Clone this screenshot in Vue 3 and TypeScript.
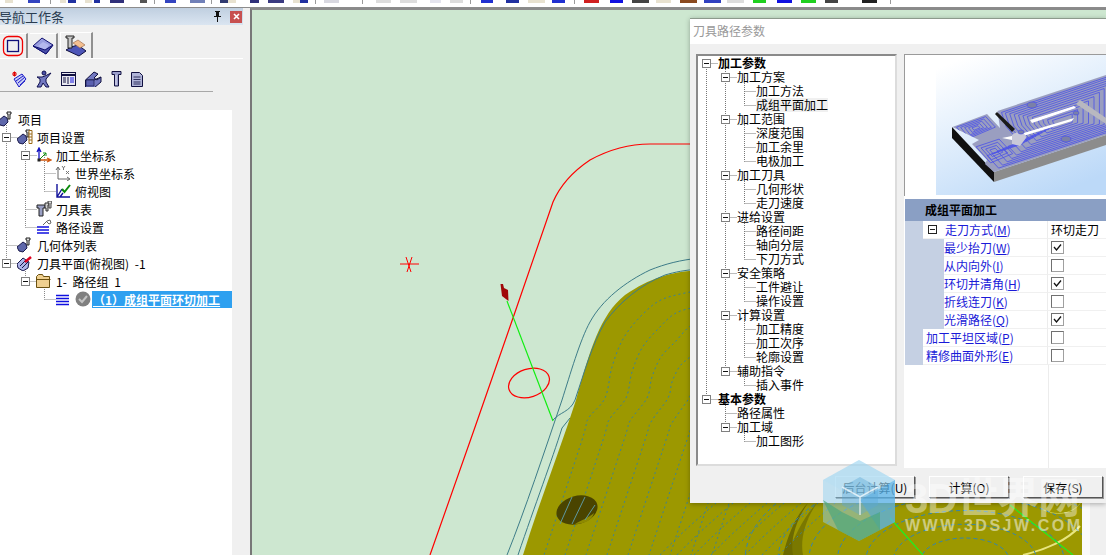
<script setup lang="ts">
interface Row { label: string; d: number; exp?: boolean; icon?: string; bold?: boolean; sel?: boolean; hi?: boolean }

const leftRows: Row[] = [
  { label: '项目', d: -1, icon: 'proj' },
  { label: '项目设置', d: 0, exp: true, icon: 'settings' },
  { label: '加工坐标系', d: 1, exp: true, icon: 'coords' },
  { label: '世界坐标系', d: 2, icon: 'world' },
  { label: '俯视图', d: 2, icon: 'top' },
  { label: '刀具表', d: 1, icon: 'tools' },
  { label: '路径设置', d: 1, icon: 'pathset' },
  { label: '几何体列表', d: 0, icon: 'proj' },
  { label: '刀具平面(俯视图) -1', d: 0, exp: true, icon: 'plane' },
  { label: '1- 路径组 1', d: 1, exp: true, icon: 'folder' },
  { label: '（1）成组平面环切加工', d: 2, icon: 'path', sel: true }
]

const rightRows: Row[] = [
  { label: '加工参数', d: 0, exp: true, bold: true },
  { label: '加工方案', d: 1, exp: true },
  { label: '加工方法', d: 2 },
  { label: '成组平面加工', d: 2, hi: true },
  { label: '加工范围', d: 1, exp: true },
  { label: '深度范围', d: 2 },
  { label: '加工余里', d: 2 },
  { label: '电极加工', d: 2 },
  { label: '加工刀具', d: 1, exp: true },
  { label: '几何形状', d: 2 },
  { label: '走刀速度', d: 2 },
  { label: '进给设置', d: 1, exp: true },
  { label: '路径间距', d: 2 },
  { label: '轴向分层', d: 2 },
  { label: '下刀方式', d: 2 },
  { label: '安全策略', d: 1, exp: true },
  { label: '工件避让', d: 2 },
  { label: '操作设置', d: 2 },
  { label: '计算设置', d: 1, exp: true },
  { label: '加工精度', d: 2 },
  { label: '加工次序', d: 2 },
  { label: '轮廓设置', d: 2 },
  { label: '辅助指令', d: 1, exp: true },
  { label: '插入事件', d: 2 },
  { label: '基本参数', d: 0, exp: true, bold: true },
  { label: '路径属性', d: 1 },
  { label: '加工域', d: 1, exp: true },
  { label: '加工图形', d: 2 }
]

function connectors(rows: Row[], base: number, rowH: number): string {
  let out = ''
  rows.forEach((r, i) => {
    if (r.d < 0) return
    const x = base + 19 * r.d + 0.5
    const y = Math.round(rowH * (i + 0.5)) + 0.5
    out += `M${x} ${y}H${x + 11}`
    for (let j = i - 1; j >= 0; j--) {
      if (rows[j].d <= r.d) {
        out += `M${x} ${Math.round(rowH * (j + 0.5))}V${y}`
        break
      }
    }
  })
  return out
}
const leftLines = connectors(leftRows, 6, 18)
const rightLines = connectors(rightRows, 8, 14)

interface Prop { name: string; key: string; sub?: boolean; head?: boolean; value?: string; checked?: boolean }
const props: Prop[] = [
  { name: '走刀方式(', key: 'M', head: true, value: '环切走刀' },
  { name: '最少抬刀(', key: 'W', sub: true, checked: true },
  { name: '从内向外(', key: 'I', sub: true, checked: false },
  { name: '环切并清角(', key: 'H', sub: true, checked: true },
  { name: '折线连刀(', key: 'K', sub: true, checked: false },
  { name: '光滑路径(', key: 'Q', sub: true, checked: true },
  { name: '加工平坦区域(', key: 'P', checked: false },
  { name: '精修曲面外形(', key: 'E', checked: false }
]

const toolbar: [number, number, string][] = [
  [5, 13, '#e8e2d0'], [28, 40, '#3344c0'], [60, 66, '#e8e2d0'], [68, 76, '#2030a0'],
  [85, 92, '#e8e2d0'], [94, 100, '#2030a0'], [110, 124, '#30307a'], [140, 147, '#555'],
  [165, 176, '#3344c0'], [190, 205, '#7080b8'], [220, 228, '#303a70'], [228, 236, '#e8e2d0'],
  [250, 259, '#30307a'], [268, 284, '#3a3a80'], [293, 300, '#e8e2d0'], [300, 308, '#2030a0'],
  [324, 339, '#d8d8e0'], [376, 391, '#dddddd'], [400, 417, '#dddddd'], [430, 441, '#e4e4ee'],
  [450, 463, '#dddddd'], [481, 493, '#2030d0'], [506, 519, '#2030a0'], [528, 545, '#e8e2d0'],
  [552, 565, '#2030d0'], [584, 599, '#d02020'], [610, 623, '#1010e0'], [632, 649, '#444'],
  [656, 671, '#e8e2d0'], [680, 697, '#8a4a20'], [704, 721, '#3040c0'], [727, 744, '#ddd'],
  [753, 766, '#20d020'], [777, 792, '#1010e0'], [801, 816, '#20d020'], [825, 838, '#444'],
  [862, 877, '#222']
]
const toolbarSeps = [50, 154, 211, 315, 362, 470, 574, 890]

// Dotted tool-path contours on the olive part: nested copies of its edge.
function smooth(p: [number, number][]): string {
  let d = `M${p[0][0]} ${p[0][1]}`
  for (let i = 0; i < p.length - 1; i++) {
    const a = p[Math.max(i - 1, 0)], b = p[i], c = p[i + 1], e = p[Math.min(i + 2, p.length - 1)]
    const c1 = [b[0] + (c[0] - a[0]) / 6, b[1] + (c[1] - a[1]) / 6]
    const c2 = [c[0] - (e[0] - b[0]) / 6, c[1] - (e[1] - b[1]) / 6]
    d += `C${c1[0].toFixed(1)} ${c1[1].toFixed(1)} ${c2[0].toFixed(1)} ${c2[1].toFixed(1)} ${c[0]} ${c[1]}`
  }
  return d
}
const contours: string[] = []
for (let i = 1; i <= 9; i++) {
  contours.push(smooth([
    [700, 274 + 16 * i], [650 + 13 * i, 285 + 14 * i], [624 + 17 * i, 303 + 13 * i],
    [604 + 19 * i, 330 + 9 * i], [592 + 20 * i, 362 + 5 * i], [584 + 21 * i, 398],
    [567 + 21 * i, 418 + i], [561 + 21 * i, 440], [523 + 21 * i, 555]
  ]))
}
const diagonals: string[] = []
for (let i = 0; i < 8; i++) {
  const x = 690 + i * 17
  diagonals.push(`M${x - 30} 555C${x - 14} 538 ${x + 4} 522 ${x + 26} 503`)
}
const rings = [40, 65, 90, 116, 142, 170, 200]

// Cutter rings on the preview plate: shrunken copies of each pocket outline.
function nested(poly: [number, number][], cx: number, cy: number, steps: number[]): string {
  return steps
    .map((s) =>
      poly
        .map((p, i) => `${i ? 'L' : 'M'}${(cx + (p[0] - cx) * s).toFixed(1)} ${(cy + (p[1] - cy) * s).toFixed(1)}`)
        .join('') + 'Z'
    )
    .join('')
}
const plateMain = nested(
  [[999, 112], [1130, 68], [1130, 126], [996, 170], [984, 157], [1020, 145], [1004, 127]],
  1062, 122,
  [0.96, 0.9, 0.83, 0.76, 0.69, 0.62, 0.55, 0.47, 0.39, 0.31, 0.23, 0.15]
)
const plateLeft = nested(
  [[954, 127], [987, 115], [998, 127], [965, 141]],
  976, 128,
  [0.88, 0.7, 0.52, 0.34, 0.18]
)
const plateLower = nested(
  [[973, 146], [1000, 137], [1016, 154], [990, 165]],
  994, 151,
  [0.85, 0.62, 0.4, 0.2]
)
</script>

<template>
  <div class="screen">
    <div class="toolbar">
      <span
        v-for="(t, i) in toolbar"
        :key="i"
        class="tb-bit"
        :style="{ left: t[0] + 'px', width: t[1] - t[0] + 'px', background: t[2] }"
      ></span>
      <span v-for="s in toolbarSeps" :key="s" class="tb-sep" :style="{ left: s + 'px' }"></span>
    </div>

    <div class="main">
      <aside class="nav">
        <div class="nav-title">
          <span class="nav-title-text">导航工作条</span>
          <svg class="pin" width="9" height="11" viewBox="0 0 9 11"><path d="M2 0h5v1H6v4h2v1H5v5H4V6H1V5h2V1H2z" fill="#111" /></svg>
          <span class="close">
            <svg width="7" height="7" viewBox="0 0 7 7"><path d="M1 1l5 5M6 1L1 6" stroke="#fff" stroke-width="1.6" /></svg>
          </span>
        </div>

        <div class="tabs">
          <div class="tab">
            <svg width="22" height="22" viewBox="0 0 22 22">
              <rect x="1.500" y="1.500" width="19" height="19" rx="5" fill="none" stroke="#f00000" stroke-width="1.300" />
              <rect x="5.500" y="5.500" width="11" height="11" fill="none" stroke="#10107a" stroke-width="1.300" />
            </svg>
          </div>
          <div class="tab">
            <svg width="22" height="18" viewBox="0 0 22 18">
              <path d="M1 9L10 1l11 7-7 9z" fill="#9a9fe0" stroke="#101070" />
              <path d="M6 9l5-4 6 3-4 5z" fill="#b4b8ee" />
              <path d="M1 9l13 8 7-9-8 5z" fill="#4a4fa8" stroke="#101070" />
            </svg>
          </div>
          <div class="tab tab-active">
            <svg width="24" height="22" viewBox="0 0 24 22">
              <path d="M2 15l5-3 7-2 8 6-7 5z" fill="#4e56b8" stroke="#101040" />
              <path d="M9 8l5-3 7 5-5 3z" fill="#f4bf90" stroke="#a07050" stroke-width=".7" />
              <path d="M2 1h8v2H8v10H4V3H2z" fill="#c8c8c8" stroke="#222" />
            </svg>
          </div>
        </div>

        <div class="tools">
          <svg width="16" height="18" viewBox="0 0 16 18">
            <path d="M1 4h5M3.500 1.500v5M2 2l3 4M5 2L2 6" stroke="#e00000" stroke-width="1" />
            <path d="M3 9l8-5 4 5-7 8z" fill="#c8ccf4" stroke="#1818c8" />
            <path d="M5 11l7-5M7 13l7-6M9 15l5-4" stroke="#1818c8" />
          </svg>
          <svg width="16" height="18" viewBox="0 0 16 18">
            <circle cx="8" cy="3" r="2" fill="#4a50a8" stroke="#101050" />
            <path d="M1 7h5l3-1 6-3-5 6v3l3 5h-3l-3-4-2 4H1l3-5V9z" fill="#7278c0" stroke="#101050" />
          </svg>
          <svg width="15" height="14" viewBox="0 0 15 14">
            <rect x=".5" y=".5" width="14" height="13" fill="#e8e8f0" stroke="#101040" />
            <path d="M1 3h13" stroke="#101040" stroke-width="2" />
            <path d="M7 5v7M2 6h3M2 8h3M2 10h3" stroke="#101040" />
            <path d="M9 6h4M9 8h4M9 10h4" stroke="#1818e0" />
          </svg>
          <svg width="17" height="16" viewBox="0 0 17 16">
            <path d="M.5 9L9 1l4 2-4 4 3 2 4-3v5l-7 6H.5z" fill="#7278c0" stroke="#101040" />
            <path d="M.5 9H9l7-3" fill="none" stroke="#101040" />
            <path d="M1 9h8v6H1z" fill="#5a60b0" stroke="#101040" stroke-width=".6" />
          </svg>
          <svg width="11" height="16" viewBox="0 0 11 16">
            <path d="M1 .5h9v3H7.500V15h-4V3.500H1z" fill="#9a9ecb" stroke="#101040" />
            <path d="M5 4v10" stroke="#e8e8f4" />
          </svg>
          <svg width="12" height="15" viewBox="0 0 12 15">
            <path d="M.5.5h8l3 3v11H.5z" fill="#b0b4d8" stroke="#101040" />
            <path d="M2.500 5h7M2.500 7.500h7M2.500 10h7M2.500 12h7" stroke="#101040" stroke-width=".8" />
          </svg>
        </div>
        <div class="tools-rule"></div>

        <div class="nav-body">
          <div class="tree nav-tree">
            <svg class="tree-lines" width="232" height="220"><path :d="leftLines" stroke="#888" stroke-dasharray="1 1" fill="none" /></svg>
            <div v-for="r in leftRows" :key="r.label" class="nav-row">
              <span class="indent" :style="{ width: Math.max(r.d, 0) * 19 + 'px' }"></span>
              <span class="slot" :class="{ 'slot-root': r.d < 0 }"><i v-if="r.exp" class="exp exp-nav"></i></span>
              <svg class="row-icon" :class="{ 'icon-root': r.d < 0 }" width="16" height="16" viewBox="0 0 16 16">
                <template v-if="r.icon === 'proj' || r.icon === 'settings'">
                  <path d="M0 10l6-5 3 2 1 4-4 4-4-1z" fill="#5e67aa" stroke="#18184a" />
                  <path d="M9 1h4v2h-1v5h-2V3H9z" fill="#ddd" stroke="#222" />
                  <path v-if="r.icon === 'settings'" d="M12 1.500h3v13h-3zM12 5h3M12 8h3M12 11h3" fill="#fff" stroke="#9a6a18" />
                </template>
                <template v-else-if="r.icon === 'coords'">
                  <path d="M3 13V2M1 5l2-4 2 4" stroke="#1010c0" fill="none" stroke-width="1.300" />
                  <path d="M3 13h11M11 11l4 2-4 2" stroke="#d05810" fill="none" stroke-width="1.300" />
                  <path d="M3 13l7-7M7 6h3v3" stroke="#109010" fill="none" />
                  <rect x="1.500" y="11.500" width="3" height="3" fill="#222" />
                </template>
                <template v-else-if="r.icon === 'world'">
                  <path d="M3 14V3M1 5l2-3 2 3M3 14h11M12 12l3 2-3 2" stroke="#666" fill="none" />
                  <path d="M7 1l1.500 2L10 1M8.500 3v2M11 6l3 3M14 6l-3 3" stroke="#777" fill="none" />
                </template>
                <template v-else-if="r.icon === 'top'">
                  <path d="M2 1v13h13M2 14L7 6M5 14l3-4" stroke="#10109a" fill="none" stroke-width="1.400" />
                  <path d="M7 6l2.500 3L15 2" stroke="#0a8a0a" fill="none" stroke-width="2" />
                </template>
                <template v-else-if="r.icon === 'tools'">
                  <path d="M1 4h8v3H7v8H3V7H1z" fill="#9aa0c4" stroke="#222" />
                  <path d="M9 2h4v2h-1v6h-2V7H9z" fill="#d0d0d0" stroke="#333" />
                  <path d="M12 0h4v2h-1v5h-2V2h-1z" fill="#ddd" stroke="#444" />
                </template>
                <template v-else-if="r.icon === 'pathset'">
                  <path d="M1 8h12M1 11h12M1 14h12" stroke="#1010e0" stroke-width="1.400" />
                  <path d="M7 6l4-4 3-1 1 3-2 1-2-2" fill="none" stroke="#666" />
                </template>
                <template v-else-if="r.icon === 'plane'">
                  <path d="M0 9l6-6 6 4-1 6-5 3-5-3z" fill="#aeb4e8" stroke="#18184a" />
                  <path d="M3 11l6-6M5 13l6-6" stroke="#18184a" />
                  <path d="M8 7l6-5" stroke="#e00020" stroke-width="2.500" />
                </template>
                <template v-else-if="r.icon === 'folder'">
                  <path d="M.5 3.500l2-2h4l1 2h6v11H.5z" fill="#f0d090" stroke="#6a5010" />
                  <path d="M.5 6.500h14" stroke="#6a5010" />
                </template>
                <template v-else-if="r.icon === 'path'">
                  <path d="M1 4.500h13M1 7.500h13M1 10.500h13M1 13.500h13" stroke="#1010e0" stroke-width="1.300" />
                </template>
              </svg>
              <svg v-if="r.icon === 'path'" class="state" width="16" height="16" viewBox="0 0 16 16">
                <circle cx="8" cy="8" r="7.500" fill="#808080" />
                <path d="M4 8l3 3 5-6" stroke="#c4c4c4" stroke-width="2" fill="none" />
              </svg>
              <span class="nav-label" :class="{ selected: r.sel }">{{ r.label }}</span>
            </div>
          </div>
          <div class="scrollbar"></div>
        </div>
      </aside>

      <div class="gutter"></div>

      <div class="canvas">
        <svg width="854" height="545" viewBox="252 10 854 545">
          <path d="M523 555C540 500 560 450 576 400C590 350 600 315 625 295C650 278 670 272 700 270L1106 270V555Z" fill="#9c9800" />
          <path d="M817 503C805 520 800 540 803 555H787C795 535 805 515 817 503Z" fill="#7a7800" />
          <path d="M808 503C796 520 790 540 793 555H783C788 535 796 515 808 503Z" fill="#6c6a00" />
          <path d="M1023 555C1045 550 1068 540 1080 526" stroke="#e8e680" stroke-width="2" fill="none" />
          <path d="M1040 508C1060 520 1078 510 1082 500" stroke="#c8c640" stroke-width="1" fill="none" />
          <g fill="none" stroke="#3d7c88" stroke-width="1">
            <path d="M507 555C525 510 545 450 562 400C570 375 580 340 590 322C602 300 625 282 650 270C665 264 680 260 700 258" />
            <path d="M553 420C560 412 570 412 575 400C585 370 592 345 605 322C620 302 640 285 665 275C675 272 685 270 700 269" />
            <path d="M518 555C535 505 552 460 562 428L570 418" />
          </g>
          <g fill="none" stroke="#3c8296" stroke-width="1" stroke-dasharray="2 3">
            <path v-for="c in contours" :key="c" :d="c" />
            <path v-for="c in diagonals" :key="c" :d="c" />
          </g>
          <ellipse cx="577" cy="510" rx="21" ry="14" transform="rotate(-16 577 510)" fill="#4a4400" />
          <path d="M575 524C582 520 588 518 594 513C592 520 585 524 575 524Z" fill="#8e8a00" />
          <path d="M572 497L560 524M585 497L572 524M595 505L585 520" stroke="#5e98a0" stroke-width="1" />
          <g fill="none" stroke="#2f84b8" stroke-width="1" stroke-dasharray="4 3">
            <ellipse v-for="r in rings" :key="r" cx="965" cy="560" :rx="r * 1.100" :ry="r * 0.550" />
          </g>
          <path d="M430 555L474 430L513 318L553 202C560 186 572 172 590 160C612 148 632 144 650 144H700" fill="none" stroke="#ff0000" stroke-width="1.200" />
          <ellipse cx="529" cy="383" rx="21" ry="14" transform="rotate(-18 529 383)" fill="none" stroke="#ff0000" stroke-width="1.200" />
          <path d="M400 264h19M406 257l5 15M412 257l-5 15" stroke="#ff0000" fill="none" />
          <path d="M507 301L553 421" stroke="#10ee10" stroke-width="1.200" />
          <path d="M890 518L923 555M1010 505L1073 555" stroke="#20f020" stroke-width="1.200" />
          <path d="M500.500 284L503 284L504 288L508 290L508.500 301L502 296L501 288Z" fill="#a00808" />
          <rect x="1082" y="503" width="24" height="52" fill="#f0f0f0" />
          <rect x="1082" y="503" width="8" height="52" fill="#fafafa" />
        </svg>
      </div>
    </div>

    <section class="dialog">
      <header class="dlg-title">刀具路径参数</header>
      <div class="dlg-body">
        <div class="tree dlg-tree">
          <svg class="tree-lines" width="197" height="400"><path :d="rightLines" stroke="#777" stroke-dasharray="1 1" fill="none" /></svg>
          <div v-for="(r, i) in rightRows" :key="i" class="dlg-row" :class="{ bold: r.bold }">
            <span class="indent" :style="{ width: r.d * 19 + 'px' }"></span>
            <span class="dlg-slot"><i v-if="r.exp" class="exp"></i></span>
            <span :class="{ hi: r.hi }">{{ r.label }}</span>
          </div>
        </div>

        <div class="side">
          <div class="preview">
            <div class="preview-blank"></div>
            <svg class="plate" width="170" height="140" viewBox="936 55 170 140">
              <defs>
                <linearGradient id="sky" x1=".2" y1="0" x2=".7" y2="1">
                  <stop offset="0" stop-color="#ffffff" />
                  <stop offset="1" stop-color="#bcd9f8" />
                </linearGradient>
                <clipPath id="face">
                  <path d="M952.500 127L987 114L1000 128L997.500 111L1106 75V135L994 172L985 164L987 160L972 144L979 140Z" />
                </clipPath>
              </defs>
              <rect x="936" y="55" width="170" height="140" fill="url(#sky)" />
              <path d="M952 127V138L994 182V172Z" fill="#101010" />
              <path d="M994 172V182L1106 145V135Z" fill="#8c8c8c" />
              <path d="M952.500 127L987 114L1000 128L997.500 111L1106 75V135L994 172L985 164L987 160L972 144L979 140Z" fill="#9a9ec0" />
              <g clip-path="url(#face)" fill="none" stroke="#4a50e8" stroke-width=".8">
                <path :d="plateMain" />
                <path :d="plateLeft" />
                <path :d="plateLower" />
              </g>
              <path d="M997 112L1015 129L1012 132L995 114Z" fill="#1a1a1a" />
              <path d="M1002 138L1017 135L1074 118L1072 121L1020 137L1012 140Z" fill="#fff" />
              <path d="M1030 120L1074 106L1076 108L1032 123Z" fill="#fff" />
              <path d="M1012 135C1018 130 1026 132 1026 138L1020 146L1012 144Z" fill="#c8c8d8" />
              <g fill="#7a80a8" stroke="#4a50e8" stroke-width=".7">
                <ellipse cx="1032" cy="105" rx="5" ry="3" />
                <ellipse cx="1066" cy="139" rx="5" ry="3" />
                <ellipse cx="1021" cy="132" rx="3" ry="2" />
                <ellipse cx="1076" cy="113" rx="3" ry="2" />
              </g>
              <path d="M1080 100L1106 118L1106 124L1076 104Z" fill="#b8b8c0" />
            </svg>
          </div>

          <div class="prop-head">成组平面加工</div>
          <div class="prop-list">
            <div class="prop-rows">
              <div v-for="p in props" :key="p.key" class="prop-row">
                <span v-if="p.sub" class="prop-indent"></span>
                <div class="prop-name" :class="{ head: p.head }">
                  <i v-if="p.head" class="exp exp-prop"></i>
                  <span>{{ p.name }}<u>{{ p.key }}</u>)</span>
                </div>
                <div class="prop-val">
                  <span v-if="p.value">{{ p.value }}</span>
                  <span v-else class="check">
                    <svg v-if="p.checked" width="9" height="9" viewBox="0 0 9 9"><path d="M1 4l2.500 3L8 1.500" stroke="#111" stroke-width="1.300" fill="none" /></svg>
                  </span>
                </div>
              </div>
            </div>
            <div class="prop-fill"></div>
          </div>
        </div>
      </div>
      <footer class="dlg-foot">
        <button class="btn">后台计算(U)</button>
        <button class="btn">计算(O)</button>
        <button class="btn">保存(S)</button>
      </footer>
    </section>

    <svg class="watermark" width="290" height="90" viewBox="820 458 290 90">
      <path d="M859 460L895 480V522L859 541L823 522V480Z" fill="#8fd0f0" opacity=".5" />
      <path d="M859 460L895 480L860 500L823 480Z" fill="#b0dff5" opacity=".3" />
      <path d="M860 500L895 480V522L880 530Z" fill="#45a8e6" opacity=".55" />
      <path d="M823 500L842 512L860 521L880 512L880 530L859 541L838 530Z" fill="#4fa67c" opacity=".7" />
      <path d="M842 487L860 477L878 487V505L860 515L842 505Z" fill="#5aa8d8" opacity=".4" />
      <path d="M842 487L860 497L878 487M860 497V515" fill="none" stroke="#ffffff" stroke-opacity=".7" stroke-width="1.500" />
      <text x="905" y="513" class="wm-big" textLength="175">3D世界网</text>
      <text x="905" y="531" class="wm-small" textLength="175">WWW.3DSJW.COM</text>
    </svg>
  </div>
</template>

<style>
html, body { margin: 0; padding: 0; overflow: hidden; background: #f0f0f0; }
</style>

<style scoped>
.screen {
  position: relative;
  width: 1106px;
  height: 555px;
  overflow: hidden;
  display: flex;
  flex-direction: column;
  background: #f0f0f0;
  font-family: "Noto Sans CJK SC", "Liberation Sans", sans-serif;
  font-size: 12px;
  word-spacing: 3px;
  color: #000;
}
.toolbar {
  position: relative;
  flex: none;
  height: 7px;
  background: #fff;
  border-bottom: 1px solid #8c8c8c;
  overflow: hidden;
}
.tb-bit { position: absolute; top: 0; height: 3px; }
.tb-sep { position: absolute; top: 0; width: 1px; height: 4px; background: #9a9a9a; }
.main { flex: 1; display: flex; min-height: 0; }
.nav { width: 243px; flex: none; display: flex; flex-direction: column; min-height: 0; }
.nav-title {
  height: 17px;
  flex: none;
  display: flex;
  align-items: center;
  background: linear-gradient(#c0cfe0, #dae5f1);
  color: #2a3c50;
  font-size: 13px;
  line-height: 17px;
}
.nav-title-text { flex: 1; margin-left: -1px; }
.pin { margin-right: 8px; }
.close {
  width: 12px;
  height: 12px;
  margin-right: 1px;
  background: #c75050;
  display: flex;
  align-items: center;
  justify-content: center;
}
.tabs {
  height: 26px;
  flex: none;
  margin-top: 7px;
  display: flex;
  gap: 2px;
  align-items: flex-end;
  border-bottom: 1px solid #fff;
}
.tab {
  width: 28px;
  height: 25px;
  display: flex;
  align-items: center;
  justify-content: center;
  border-right: 2px solid #909090;
  border-top: 1px solid #fff;
  box-sizing: border-box;
}
.tab-active { width: 33px; height: 26px; border-left: 1px solid #fff; }
.tools {
  flex: none;
  height: 30px;
  margin-top: 2px;
  padding: 8px 0 2px 11px;
  display: flex;
  align-items: center;
  gap: 9px;
  box-sizing: border-box;
}
.tools-rule { flex: none; width: 213px; height: 1px; background: #a8a8a8; }
.nav-body { flex: 1; margin-top: 18px; display: flex; min-height: 0; }
.tree { position: relative; }
.tree-lines { position: absolute; left: 0; top: 0; }
.nav-tree { width: 232px; background: #fff; }
.scrollbar { flex: 1; background: #f0f0f0; }
.nav-row {
  position: relative;
  height: 18px;
  display: flex;
  align-items: center;
  line-height: 18px;
  white-space: nowrap;
}
.indent { flex: none; }
.slot { flex: none; width: 17px; display: flex; }
.slot-root { width: 0; }
.exp {
  position: relative;
  display: block;
  flex: none;
  width: 9px;
  height: 9px;
  box-sizing: border-box;
  border: 1px solid #808080;
  background: #fff;
}
.exp::after {
  content: "";
  position: absolute;
  left: 1px;
  right: 1px;
  top: 3px;
  height: 1px;
  background: #111;
}
.exp-nav { margin-left: 2px; }
.row-icon { flex: none; margin-right: 4px; }
.icon-root { margin-left: -2px; }
.state { flex: none; margin: 0 1px 0 0; }
.nav-label { height: 17px; line-height: 17px; }
.selected {
  flex: 1;
  background: #2ea0f0;
  color: #fff;
  font-weight: 700;
  text-decoration: underline;
  padding-left: 1px;
}
.gutter { width: 7px; flex: none; background: #f0f0f0; }
.canvas {
  flex: 1;
  min-width: 0;
  background: #cde7d0;
  border-left: 2px solid #787878;
  border-top: 2px solid #8a8a8a;
  overflow: hidden;
}
.canvas svg { display: block; }
.dialog {
  position: absolute;
  left: 690px;
  top: 18px;
  right: 0;
  height: 485px;
  display: flex;
  flex-direction: column;
  background: #f0f0f0;
  border-top: 1px solid #8c9a8c;
  box-sizing: border-box;
  box-shadow: 0 1px 5px rgba(0, 0, 0, .3);
}
.dlg-title {
  height: 25px;
  flex: none;
  padding: 0 0 2px 3px;
  box-sizing: border-box;
  background: #fff;
  color: #999;
  line-height: 23px;
}
.dlg-body { flex: none; height: 414px; margin-top: 10px; padding-left: 6px; display: flex; gap: 7px; }
.dlg-tree {
  width: 201px;
  height: 412px;
  box-sizing: border-box;
  background: #fff;
  border: 2px solid;
  border-color: #8a8a8a #dcdcdc #dcdcdc #8a8a8a;
}
.dlg-row {
  position: relative;
  height: 14px;
  display: flex;
  align-items: center;
  line-height: 14px;
  white-space: nowrap;
}
.bold { font-weight: 700; }
.dlg-slot { flex: none; width: 20px; display: flex; padding-left: 4px; box-sizing: border-box; }
.hi { background: #f0f0f0; }
.side { flex: 1; min-width: 0; background: #fff; display: flex; flex-direction: column; }
.preview {
  flex: none;
  height: 142px;
  display: flex;
  box-sizing: border-box;
  border-left: 1px solid #9a9a9a;
  border-top: 1px solid #9a9a9a;
}
.preview-blank { width: 31px; flex: none; background: #fff; }
.plate { display: block; flex: none; }
.prop-head {
  flex: none;
  height: 22px;
  margin: 3px 0 0 1px;
  padding-left: 20px;
  background: #8a9fc4;
  font-weight: 700;
  line-height: 22px;
}
.prop-list { flex: 1; display: flex; flex-direction: column; margin-left: 1px; min-height: 0; }
.prop-rows { flex: none; padding-left: 18px; background: #c5d0e3; }
.prop-row { height: 18px; display: flex; }
.prop-indent { flex: none; width: 21px; }
.prop-name {
  flex: 1;
  min-width: 0;
  box-sizing: border-box;
  padding-left: 3px;
  display: flex;
  align-items: center;
  background: #fff;
  border-bottom: 1px solid #f0f0f0;
  color: #1a1ad8;
  white-space: nowrap;
  line-height: 17px;
}
.prop-indent + .prop-name { padding-left: 0; }
.prop-name.head { padding-left: 5px; gap: 8px; }
.exp-prop { border-color: #222; }
.exp-prop::after { background: #222; }
.prop-val {
  flex: none;
  width: 59px;
  box-sizing: border-box;
  background: #fff;
  border-left: 1px solid #ececec;
  border-bottom: 1px solid #f0f0f0;
  padding-left: 3px;
  display: flex;
  align-items: center;
  line-height: 17px;
  white-space: nowrap;
  overflow: hidden;
}
.check {
  width: 13px;
  height: 13px;
  box-sizing: border-box;
  border: 1px solid #a0a0a0;
  border-top-color: #707070;
  border-left-color: #707070;
  background: #fff;
  display: flex;
  align-items: center;
  justify-content: center;
}
.prop-fill { flex: 1; width: 144px; box-sizing: border-box; border-right: 1px solid #ececec; }
.dlg-foot {
  flex: 1;
  display: flex;
  justify-content: flex-end;
  align-items: flex-start;
  gap: 14px;
  padding: 8px 3px 0 0;
}
.btn {
  width: 80px;
  height: 22px;
  padding: 0;
  background: #f0f0f0;
  border: 1px solid;
  border-color: #fff #555 #555 #fff;
  box-shadow: 1px 1px 0 #999;
  font: inherit;
  color: #000;
}
.watermark { position: absolute; left: 820px; top: 458px; pointer-events: none; }
.wm-big { font-size: 42px; font-weight: 700; fill: #fff; fill-opacity: .42; font-family: "Liberation Sans", "Noto Sans CJK SC", sans-serif; }
.wm-small { font-size: 16px; font-weight: 700; fill: #fff; fill-opacity: .5; font-family: "Liberation Sans", sans-serif; }
</style>
